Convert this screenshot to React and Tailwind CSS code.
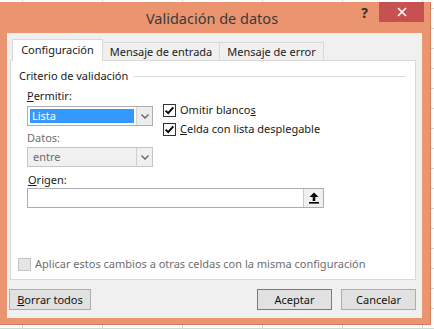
import React from "react";

function CheckBox({ checked, disabled }) {
  return (
    <svg width="13" height="13" viewBox="0 0 13 13" className="shrink-0">
      <rect
        x="0.5"
        y="0.5"
        width="12"
        height="12"
        fill={disabled ? "#e6e6e6" : "#ffffff"}
        stroke={disabled ? "#c4c4c4" : "#333333"}
      />
      {checked && (
        <path d="M2.6 6.6 L5.2 9.2 L10.3 3.4" fill="none" stroke="#000" strokeWidth="1.9" />
      )}
    </svg>
  );
}

function Chevron() {
  return (
    <svg width="8" height="5" viewBox="0 0 8 5">
      <path d="M0.5 0.5 L4 4 L7.5 0.5" fill="none" stroke="#606060" strokeWidth="1.3" />
    </svg>
  );
}

function App() {
  return (
    <div className="w-[434px] h-[329px] overflow-hidden bg-white bg-[linear-gradient(90deg,#d6d6d6_1px,transparent_1px),linear-gradient(#d6d6d6_1px,transparent_1px)] bg-[size:80px_20px] bg-[position:22px_8px] pt-[2px] font-['Noto_Sans',sans-serif] text-[11px] leading-[16px] text-[#1a1a1a]">
      <div className="w-[431px] h-[323px] bg-[#ea9470] border-r border-b border-[#cf7e5a] flex flex-col">
        {/* title bar */}
        <div className="h-[31px] flex shrink-0">
          <div className="flex-1" />
          <div className="flex items-center text-[14.5px] text-[#3a3a3a] pt-px">
            Validación de datos
          </div>
          <div className="flex-1 flex justify-end items-start pr-[6px]">
            <span className="mt-[3px] mr-[11px] text-[14px] font-bold text-[#3a2a20] leading-[16px]">?</span>
            <div className="w-[45px] h-[20px] bg-[#c75050] flex items-center justify-center">
              <svg width="10" height="10" viewBox="0 0 10 10">
                <path d="M1 1 L9 9 M9 1 L1 9" stroke="#fff" strokeWidth="1.6" />
              </svg>
            </div>
          </div>
        </div>

        {/* client */}
        <div className="ml-[7px] w-[415px] h-[285px] bg-[#f0f0f0] pt-[6px] flex flex-col">
          {/* tabs */}
          <div className="flex items-end h-[22px] -mb-px ml-[5px] relative z-10">
            <div className="w-[91px] h-[22px] bg-white border-x border-t border-[#d9d9d9] flex items-center justify-center pb-px">
              Configuración
            </div>
            <div className="w-[117px] h-[18px] mb-px bg-[#f0f0f0] border-r border-t border-[#d9d9d9] flex items-center justify-center">
              Mensaje de entrada
            </div>
            <div className="w-[104px] h-[18px] mb-px bg-[#f0f0f0] border-r border-t border-[#d9d9d9] flex items-center justify-center">
              Mensaje de error
            </div>
          </div>

          {/* panel */}
          <div className="ml-[3px] w-[406px] h-[220px] bg-white border border-[#d9d9d9] flex flex-col pt-[7px]">
            <div className="flex items-center pl-[8px] pr-[9px]">
              <span>Criterio de validación</span>
              <div className="flex-1 h-px bg-[#dcdcdc] ml-[6px]" />
            </div>

            <div className="flex ml-[16px] mt-[4px]">
              <div className="w-[126px] flex flex-col">
                <span>
                  <u>P</u>ermitir:
                </span>
                <div className="mt-[2px] h-[20px] border border-[#abadb3] bg-white flex">
                  <div className="flex-1 m-[2px] bg-[#3399ff] text-white flex items-center pl-[2px]">
                    Lista
                  </div>
                  <div className="w-[16px] bg-[#ececec] border-l border-[#d4d4d4] flex items-center justify-center">
                    <Chevron />
                  </div>
                </div>
                <span className="mt-[4px] text-[#6d6d6d]">Datos:</span>
                <div className="mt-[1px] h-[20px] border border-[#c5c5c5] bg-[#f0f0f0] flex text-[#6d6d6d]">
                  <div className="flex-1 flex items-center pl-[5px]">entre</div>
                  <div className="w-[16px] border-l border-[#cfcfcf] flex items-center justify-center">
                    <Chevron />
                  </div>
                </div>
              </div>
              <div className="ml-[10px] mt-[14px] flex flex-col gap-[3px]">
                <div className="flex items-center gap-[4px] h-[16px]">
                  <CheckBox checked />
                  <span>
                    Omitir blanco<u>s</u>
                  </span>
                </div>
                <div className="flex items-center gap-[4px] h-[16px]">
                  <CheckBox checked />
                  <span>
                    <u>C</u>elda con lista desplegable
                  </span>
                </div>
              </div>
            </div>

            <span className="ml-[17px] mt-[5px]">
              <u>O</u>rigen:
            </span>
            <div className="ml-[16px] w-[297px] h-[20px] border border-[#abadb3] bg-white flex justify-end">
              <div className="w-[20px] bg-[#f0f0f0] border-l border-[#c9c9c9] flex items-center justify-center">
                <svg width="10" height="12" viewBox="0 0 10 12">
                  <path d="M5 0.5 L9.5 5 L6.3 5 L6.3 9 L3.7 9 L3.7 5 L0.5 5 Z" fill="#000" />
                  <rect x="0" y="10" width="10" height="1.6" fill="#000" />
                </svg>
              </div>
            </div>

            <div className="mt-auto mb-[7px] ml-[7px] flex items-center gap-[4px] h-[16px] text-[#6d6d6d]">
              <CheckBox disabled />
              <span>Aplicar estos cambios a otras celdas con la misma configuración</span>
            </div>
          </div>

          {/* buttons */}
          <div className="flex mt-[9px] ml-[2px] mr-[6px]">
            <button className="w-[82px] h-[21px] bg-[#e1e1e1] border border-[#adadad] text-[#111] flex items-center justify-center">
              <span>
                <u>B</u>orrar todos
              </span>
            </button>
            <div className="flex-1" />
            <button className="w-[75px] h-[21px] bg-[#e1e1e1] border border-[#3c8ad0] text-[#111] flex items-center justify-center">
              Aceptar
            </button>
            <button className="ml-[9px] w-[75px] h-[21px] bg-[#e1e1e1] border border-[#adadad] text-[#111] flex items-center justify-center">
              Cancelar
            </button>
          </div>
        </div>
      </div>
    </div>
  );
}

export default App;
